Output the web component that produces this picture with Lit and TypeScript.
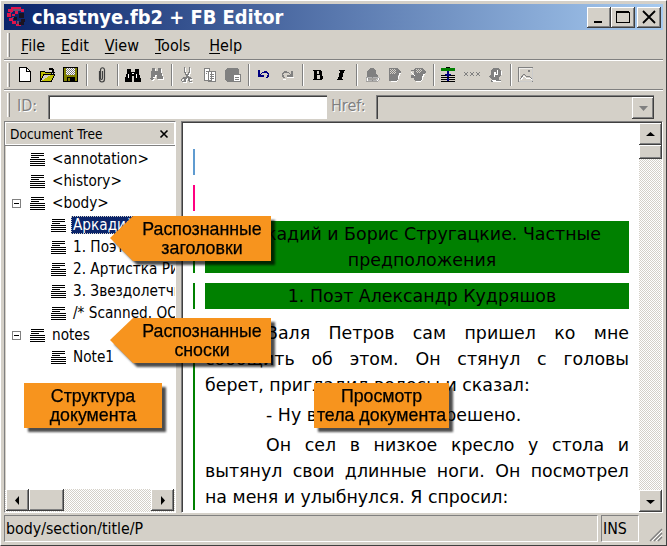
import { LitElement, html, css, svg } from "lit";
import { customElement } from "lit/decorators.js";

const icon = (body: unknown) => html`<svg class="ic" width="16" height="16" viewBox="0 0 16 16" shape-rendering="crispEdges">${body}</svg>`;
const dis = (d: string) => svg`<path d=${d} fill="#fff" transform="translate(1 1)"/><path d=${d} fill="#808080"/>`;

const icons: (unknown | null)[] = [
  icon(svg`<path d="M2.5 .5h7l4 4v10h-11z" fill="#fff" stroke="#000"/><path d="M9.5 .5v4h4" fill="none" stroke="#000"/>`),
  icon(svg`<path d="M0 5h1V4h4v1h1v1h6v2H3L1 14H0z" fill="#ffff00" stroke="none"/><path d="M.5 14.5v-10h4l1 1h6v2M.5 14.5h11l3-7H3.500l-3 7z" fill="#c0c000" stroke="#000"/><path d="M9 1h3l2 2v2h1l-2 2-2-2h1V3h-3z" fill="#000"/>`),
  icon(svg`<path d="M0 1h15v14H0z" fill="#808000"/><path d="M.5 .5h14v14h-14z" fill="none" stroke="#000"/><path d="M3 1h9v7H3z" fill="#fff"/><path d="M3 1h1v1H3zM5 1h1v1H5zM7 1h1v1H7zM9 1h1v1H9zM11 1h1v1h-1zM4 2h1v1H4zM6 2h1v1H6zM8 2h1v1H8zM10 2h1v1h-1zM3 3h1v1H3zM5 3h1v1H5zM7 3h1v1H7zM9 3h1v1H9zM11 3h1v1h-1zM4 4h1v1H4zM6 4h1v1H6zM8 4h1v1H8zM10 4h1v1h-1zM3 5h1v1H3zM5 5h1v1H5zM7 5h1v1H7zM9 5h1v1H9zM11 5h1v1h-1zM4 6h1v1H4zM6 6h1v1H6zM8 6h1v1H8zM10 6h1v1h-1zM3 7h1v1H3zM5 7h1v1H5zM7 7h1v1H7zM9 7h1v1H9zM11 7h1v1h-1z" fill="#808080"/><path d="M4 10h8v5H4z" fill="#000"/><path d="M5 11h2v3H5z" fill="#808000"/>`),
  null,
  icon(svg`<path d="M5.500 4v8c0 4 5 4 5 0V3c0-3-4-3-4 0v8c0 2 2 2 2 0V4" fill="none" stroke="#404040" stroke-width="1.2" shape-rendering="auto"/>`),
  null,
  icon(svg`<path d="M2 2h4v3h4V2h4v4l2 6v3H9V9H7v6H0v-3l2-6z" fill="#000"/><path d="M3 7h1v4H3zM11 7h1v4h-1zM7 6h2v1H7z" fill="#fff"/>`),
  icon(dis("M4 1h3v3h3V1h3v4l2 5v2H9V8H7v2H5v1h1l-2 3-3-3h2V8z")),
  null,
  icon(dis("M5 0h1v5h1v2h2V5h1V0h1v5l-2 4 1 1h2v1l1 1v2l-1 1h-2l-1-1v-2l-1-1-1 1v2l-1 1H3l-1-1v-2l1-1 1-1h2l1-1-2-4zM3 12v2h2v-2zM11 12v2h2v-2z")),
  icon(svg`<path d="M2.500 1.500h5v3h2v9h-7zM6.500 4.500h7v10h-7z" fill="#fff" stroke="#808080"/><path d="M8 7h4v1H8zM8 9h4v1H8zM8 11h4v1H8zM4 4h2v1H4zM4 6h1v1H4z" fill="#808080"/>`),
  icon(svg`<path d="M2 1h10l2 2v4H9v8H2l-2-2V3z" fill="#808080"/><path d="M8.500 7.500h7v7h-7z" fill="#fff" stroke="#808080"/><path d="M10 10h4v1h-4zM10 12h4v1h-4z" fill="#808080"/>`),
  null,
  icon(svg`<path d="M2 3h2v4c2-3 7-4 9-1 1 2 0 4-2 5h-1v-1c2-1 2-3 1-4-2-1-5 0-6 2h3v2H2z" fill="#000080"/>`),
  icon(svg`<path d="M14 4h-2v3c-2-3-7-4-9-1-1 2 0 4 2 5h1v-1c-2-1-2-3-1-4 2-1 5 0 6 2H8v2h6z" fill="#808080"/><path d="M4 12h3v1H4zM8 10h7v1H8z" fill="#fff"/>`),
  null,
  icon(svg`<path d="M3 3h7l2 1v3l-1 1 2 1v3l-2 1H3v-1h1V4H3zM7 4v3h2V4zM7 8v4h3V8z" fill="#000" fill-rule="evenodd"/>`),
  icon(svg`<path d="M6 3h6v1h-1L9 12h1v1H4v-1h1l2-8H6z" fill="#000"/>`),
  null,
  icon(svg`<path d="M3 4l3-3h3l3 3v3l2 1v3H4l-1-2z" fill="#808080"/><path d="M2 10h6v1H4v2h4v1H2zM8 10h6l1 1v2l-1 1H8v-1h5v-2H8zM5 12h7" fill="#fff" stroke="#808080" stroke-width=".6"/>`),
  icon(svg`<path d="M2 1h9l3 4-3 4v3l-2 2H2z" fill="#808080"/><path d="M3 2h1v1H3zM5 2h1v1H5zM7 2h1v1H7zM4 3h1v1H4zM6 3h1v1H6zM8 3h1v1H8zM3 4h1v1H3zM5 4h1v1H5zM7 4h1v1H7zM4 5h1v1H4zM6 5h1v1H6zM8 5h1v1H8zM3 6h1v1H3zM5 6h1v1H5zM7 6h1v1H7z" fill="#d4d0c8"/><path d="M12 6h2l-3 7-1 2H4v-1h6l1-2z" fill="#fff"/>`),
  icon(svg`<path d="M5 1h8l3 4-3 4v3l-2 2H5l-1-3H1V8l3-1V4H1V3h3z" fill="#808080"/><path d="M6 2h1v1H6zM8 2h1v1H8zM10 2h1v1h-1zM7 3h1v1H7zM9 3h1v1H9zM11 3h1v1h-1zM6 4h1v1H6zM8 4h1v1H8zM10 4h1v1h-1zM7 5h1v1H7zM9 5h1v1H9z" fill="#d4d0c8"/><path d="M1 5l4 3-1 1-3-3zM13 7h2l-3 7H6v1h5z" fill="#fff"/>`),
  null,
  icon(svg`<path d="M0 2h14v1H0zM0 12h14v1H0zM0 14h14v1H0zM0 10h14v1H0zM0 8h14v1H0z" fill="#000"/><path d="M5 0h4v1h5v3H0V1h5z" fill="#008000"/><path d="M5 0h4v1H5z" fill="#000"/><path d="M6 4h2v3h2l-3 4-3-4h2z" fill="#000080"/><path d="M6 11h2v3H6z" fill="#000080"/>`),
  icon(svg`<path d="M0 5h1v1h2V5h1v1H3v2h1v1H3V8H1v1H0V8h1V6H0zM6 5h1v1h2V5h1v1H9v2h1v1H9V8H7v1H6V8h1V6H6zM12 5h1v1h2V5h1v1h-1v2h1v1h-1V8h-2v1h-1V8h1V6h-1z" fill="#808080"/>`),
  icon(svg`<path d="M6 1h5l3 2v5l-2 2v3h2v2H4v-2h1l-1-2-2-1 2-3V4z" fill="#808080"/><path d="M7 5h2v2h1V3h1v5H8v2H7zM10 13H5v1h9v1H4M14 4h1v4h-1z" fill="#fff"/>`),
  null,
  icon(svg`<path d="M.5 .5h14v14H.5z" fill="#d4d0c8" stroke="#808080"/><path d="M1 1h13v13H1z" fill="none" stroke="#fff" stroke-width=".6"/><circle cx="11" cy="4" r="1.500" fill="#808080"/><path d="M2 12l4-5 3 3 2-1 3 3" fill="none" stroke="#808080"/><path d="M3 13l3-4 3 3 3-1 2 2" fill="none" stroke="#fff"/>`),
];

const tree: { t: string; d: number; box?: boolean; sel?: boolean }[] = [
  { t: "<annotation>", d: 1 },
  { t: "<history>", d: 1 },
  { t: "<body>", d: 1, box: true },
  { t: "Аркадий и Борис Стругацкие", d: 2, sel: true },
  { t: "1. Поэт Александр Кудряшов", d: 2 },
  { t: "2. Артистка Рита", d: 2 },
  { t: "3. Звездолетчик", d: 2 },
  { t: "/* Scanned. OCR", d: 2 },
  { t: "notes", d: 1, box: true },
  { t: "Note1", d: 2 },
];

const lines = svg`<svg class="tic" width="15" height="13" viewBox="0 0 15 13" shape-rendering="crispEdges"><path d="M1 0h13v1H1zM1 2h13v1H1zM1 4h8v1H1zM0 6h15v1H0zM0 8h15v1H0zM0 10h15v1H0zM0 12h15v1H0z" fill="#000"/></svg>`;

const tri = (p: string, c = "#000") => svg`<svg width="9" height="9" viewBox="0 0 9 9"><path d=${p} fill=${c}/></svg>`;

@customElement("app-root")
export class AppRoot extends LitElement {
  static styles = css`
    :host { display: block; width: 667px; height: 546px; position: relative; overflow: hidden; background: #d4d0c8; font-family: "DejaVu Sans Condensed", "DejaVu Sans", sans-serif; color: #000; box-sizing: border-box; }
    * { box-sizing: border-box; }
    .win { width: 667px; height: 546px; display: flex; flex-direction: column; border-top: 1px solid #fff; border-left: 1px solid #fff; border-right: 1px solid #404040; border-bottom: 1px solid #404040; padding: 3px; }
    .title { height: 26px; flex: none; background: linear-gradient(90deg, #0a246a, #a6caf0); display: flex; align-items: center; padding: 0 2px; gap: 5px; }
    .title .name { flex: 1; color: #fff; font: bold 19.9px "DejaVu Sans Condensed", sans-serif; white-space: nowrap; margin-left: -1px; }
    .logo { flex: none; }
    .wb { display: flex; }
    .btn { width: 24px; height: 21px; background: #d4d0c8; box-shadow: inset -1px -1px #404040, inset 1px 1px #fff, inset -2px -2px #808080; display: flex; align-items: center; justify-content: center; }
    .wb .close { margin-left: 2px; }
    .row { display: flex; align-items: center; flex: none; }
    .menu { height: 30px; border-bottom: 1px solid #808080; }
    .grip { width: 3px; height: 24px; margin-left: 3px; border-left: 1px solid #fff; border-right: 1px solid #808080; background: #d4d0c8; flex: none; }
    .menu .items { display: flex; gap: 16px; margin-left: 11px; font-size: 16px; padding-top: 1px; }
    .menu u { text-underline-offset: 2px; }
    .menu .help { margin-left: 3px; }
    .tools { height: 30px; border-top: 1px solid #fff; border-bottom: 1px solid #808080; }
    .tools .grip { margin-right: 3.500px; }
    .cell { width: 23px; display: flex; justify-content: center; flex: none; }
    .ic { display: block; }
    .sep { width: 8px; height: 22px; flex: none; display: flex; justify-content: center; }
    .sep i { display: block; width: 2px; height: 100%; border-left: 1px solid #808080; border-right: 1px solid #fff; }
    .idbar { height: 29px; border-top: 1px solid #fff; align-items: flex-end; }
    .idbar .grip { align-self: center; }
    .lbl { color: #808080; text-shadow: 1px 1px #fff; font-size: 16px; align-self: center; }
    .lbl.id { margin-left: 7px; width: 31px; }
    .lbl.href { margin-left: 4px; width: 45px; }
    .inp { height: 24px; box-shadow: inset 1px 1px #808080, inset 2px 2px #404040; flex: none; }
    .inp.a { width: 279px; background: #fff; }
    .inp.b { width: 278px; background: #d4d0c8; padding: 2px 0 0 0; display: flex; justify-content: flex-end; box-shadow: inset 1px 1px #808080, inset 2px 2px #404040, inset -1px 0 #404040; }
    .combo-b { width: 22px; height: 22px; }
    .panes { flex: 1; display: flex; min-height: 0; padding-top: 2px; gap: 5px; }
    .left { width: 172px; flex: none; display: flex; flex-direction: column; border: 1px solid #808080; border-right-color: #fff; border-bottom-color: #fff; background: #fff; box-shadow: inset 1px 1px #d4d0c8; }
    .lh { height: 24px; flex: none; background: #d4d0c8; border-bottom: 1px solid #808080; box-shadow: inset 0 0 0 1px #fff; display: flex; align-items: center; justify-content: space-between; padding: 0 6px 0 5px; font-size: 13.6px; }
    .tree { flex: 1; min-height: 0; overflow: hidden; padding-top: 2px; }
    .tr { height: 22px; display: flex; align-items: center; font-size: 15.2px; white-space: nowrap; position: relative; }
    .tr .x { width: 9px; height: 9px; border: 1px solid #808080; background: #fff; position: absolute; left: 7px; top: 7px; }
    .tr .x::after { content: ""; position: absolute; left: 1px; top: 3px; width: 5px; height: 1px; background: #000; }
    .tic { flex: none; margin-right: 6px; }
    .tr span { padding: 0 2px; margin-left: -1px; line-height: 18px; height: 18px; }
    .tr span.sel { background: #0a246a; color: #fff; outline: 1px dotted #d4d0c8; outline-offset: -1px; }
    .hsb { height: 23px; flex: none; display: flex; background: repeating-conic-gradient(#fff 0 25%, #d4d0c8 0 50%) 0 0 / 2px 2px; padding: 0 1px 1px 1px; }
    .sb { background: #d4d0c8; box-shadow: inset -1px -1px #404040, inset 1px 1px #fff, inset -2px -2px #808080; display: flex; align-items: center; justify-content: center; flex: none; }
    .right { flex: 1; display: flex; min-width: 0; border: 1px solid #808080; border-right-color: #fff; border-bottom-color: #fff; box-shadow: inset 1px 1px #404040; background: #fff; padding: 1px 0 0 1px; }
    .doc { flex: 1; min-width: 0; overflow: hidden; padding: 26px 10px 0 10px; font: 17.4px/26px "DejaVu Sans", sans-serif; }
    .blk { border-left: 2px solid #008000; padding-left: 10px; margin-bottom: 10px; }
    .blk.blue { border-color: #5f9bd0; height: 26px; }
    .blk.pink { border-color: #ff0080; height: 26px; }
    .blk.sect { padding-top: 1px; }
    .h { background: #008000; text-align: center; padding-left: 10px; }
    .p { text-align: justify; text-indent: 61px; margin: 0 0 4px; }
    .p.force { text-align-last: justify; margin: 0; }
    .p.cont { text-indent: 0; }
    .vsb { width: 23px; flex: none; display: flex; flex-direction: column; background: repeating-conic-gradient(#fff 0 25%, #d4d0c8 0 50%) 0 0 / 2px 2px; }
    .spacer { flex: 1; }
    .status { height: 29px; flex: none; display: flex; align-items: flex-end; padding-top: 2px; gap: 3px; font-size: 15.8px; }
    .status div { height: 27px; border: 1px solid #808080; border-right-color: #fff; border-bottom-color: #fff; line-height: 25px; padding-left: 1px; }
    .st1 { width: 594px; }
    .rz { flex: 1; display: flex; justify-content: flex-end; align-self: flex-end; }
    .st2 { width: 38px; }
    .cov { position: absolute; filter: drop-shadow(4px 4px 1px rgba(0,0,0,.7)); font: 17.8px/19px "Liberation Sans", Arial, sans-serif; -webkit-text-stroke: .25px #000; text-align: center; color: #000; }
    .cov > div { background: #f7941e; height: 100%; display: flex; align-items: center; justify-content: center; white-space: nowrap; }
    .c1, .c2 { left: 110px; width: 161px; height: 45px; }
    .c1 { top: 216px; }
    .c2 { top: 318px; }
    .c1 > div, .c2 > div { clip-path: polygon(23px 0, 100% 0, 100% 100%, 23px 100%, 0 22px); padding-left: 23px; }
    .c3 { left: 24px; top: 383px; width: 138px; height: 45px; }
    .c4 { left: 314px; top: 383px; width: 135px; height: 45px; }
  `;

  render() {
    return html`
      <div class="win">
        <div class="title">
          <svg class="logo" width="22" height="22" viewBox="0 0 22 22" shape-rendering="crispEdges">
            <path d="M5 1h10v2H5zM2 3h5v3H2zM15 3h3v3h-3zM1 7h4v4H1zM3 12h4v3H3zM6 15h4v3H6zM9 5h3v3H9zM6 8h3v2H6zM10 18h5v2h-5z" fill="#e0144c"/>
            <path d="M13 7h5v5h-5zM15 13h4v3h-4zM13 16h5v3h-5zM8 11h3v3H8z" fill="#1a1220"/>
            <path d="M7 3h8v2H7zM4 6h2v1H4zM6 11h2v1H6zM11 15h2v3h-2z" fill="#6a5070"/>
          </svg>
          <div class="name">chastnye.fb2 + FB Editor</div>
          <div class="wb">
            <div class="btn"><svg width="14" height="14" viewBox="0 0 14 14" shape-rendering="crispEdges"><path d="M2 11h8v2H2z" fill="#000"/></svg></div>
            <div class="btn"><svg width="14" height="14" viewBox="0 0 14 14" shape-rendering="crispEdges"><path d="M.5 2h12.500v10.500H.5z" fill="none" stroke="#000"/><path d="M0 1h13v2H0z" fill="#000"/></svg></div>
            <div class="btn close"><svg width="14" height="14" viewBox="0 0 14 14"><path d="M1 1l12 12M13 1L1 13" stroke="#000" stroke-width="1.800"/></svg></div>
          </div>
        </div>
        <div class="row menu">
          <div class="grip"></div>
          <div class="items">
            <span><u>F</u>ile</span><span><u>E</u>dit</span><span><u>V</u>iew</span><span><u>T</u>ools</span><span class="help"><u>H</u>elp</span>
          </div>
        </div>
        <div class="row tools">
          <div class="grip"></div>
          ${icons.map((i) => (i === null ? html`<div class="sep"><i></i></div>` : html`<div class="cell">${i}</div>`))}
        </div>
        <div class="row idbar">
          <div class="grip"></div>
          <div class="lbl id">ID:</div>
          <div class="inp a"></div>
          <div class="lbl href">Href:</div>
          <div class="inp b"><div class="sb combo-b">${tri("M0 2h9L4.500 7z", "#808080")}</div></div>
        </div>
        <div class="panes">
          <div class="left">
            <div class="lh">Document Tree<svg width="10" height="10" viewBox="0 0 10 10"><path d="M1.500 1.500l7 7M8.500 1.500l-7 7" stroke="#000" stroke-width="1.600"/></svg></div>
            <div class="tree">
              ${tree.map(
                (r) => html`<div class="tr" style="padding-left:${r.d === 1 ? 25 : 46}px">
                  ${r.box ? html`<div class="x"></div>` : ""}${lines}<span class=${r.sel ? "sel" : ""}>${r.t}</span>
                </div>`
              )}
            </div>
            <div class="hsb">
              <div class="sb" style="width:23px">${tri("M6 0v9L2 4.500z")}</div>
              <div class="sb" style="width:35px"></div>
              <div class="spacer"></div>
              <div class="sb" style="width:23px">${tri("M3 0v9l4-4.500z")}</div>
            </div>
          </div>
          <div class="right">
            <div class="doc">
              <div class="blk blue"></div>
              <div class="blk pink"></div>
              <div class="blk"><div class="h">Аркадий и Борис Стругацкие. Частные предположения</div></div>
              <div class="blk"><div class="h">1. Поэт Александр Кудряшов</div></div>
              <div class="blk sect">
                <p class="p force">Валя Петров сам пришел ко мне сообщить об этом. Он стянул с головы</p>
                <p class="p cont">берет, пригладил волосы и сказал:</p>
                <p class="p">- Ну вот, все давно решено.</p>
                <p class="p">Он сел в низкое кресло у стола и вытянул свои длинные ноги. Он посмотрел на меня и улыбнулся. Я спросил:</p>
              </div>
            </div>
            <div class="vsb">
              <div class="sb" style="height:22px">${tri("M0 6h9L4.500 2z")}</div>
              <div class="sb" style="height:14px"></div>
              <div class="spacer"></div>
              <div class="sb" style="height:22px">${tri("M0 3h9L4.500 7z")}</div>
            </div>
          </div>
        </div>
        <div class="status">
          <div class="st1">body/section/title/P</div>
          <div class="st2">INS</div>
          <span class="rz"><svg width="16" height="16" viewBox="0 0 16 16"><path d="M15 3L3 15M15 7L7 15M15 11L11 15" stroke="#808080" stroke-width="1.400"/><path d="M15 5L5 15M15 9L9 15" stroke="#fff"/></svg></span>
        </div>
      </div>
      <div class="cov c1"><div>Распознанные<br />заголовки</div></div>
      <div class="cov c2"><div>Распознанные<br />сноски</div></div>
      <div class="cov c3"><div>Структура<br />документа</div></div>
      <div class="cov c4"><div>Просмотр<br />тела документа</div></div>
    `;
  }
}
